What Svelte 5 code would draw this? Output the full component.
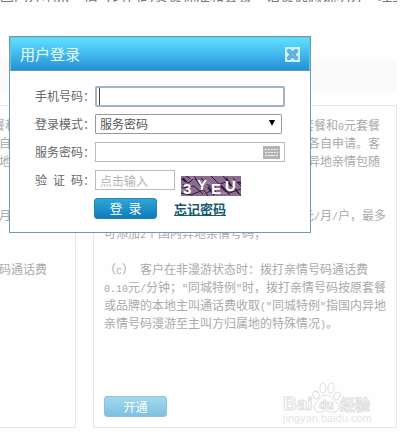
<script lang="ts">
	type Line = { text: string; tail?: 'short' | 'full' };

	const covered: Line[] = [
		{ text: '套餐和0元套餐', tail: 'short' },
		{ text: '各自申请。客', tail: 'short' },
		{ text: '异地亲情包随', tail: 'short' },
		{ text: '' },
		{ text: '' },
		{ text: '元/月/户，最多', tail: 'full' }
	];

	const leftLines: Line[] = [
		...covered,
		{ text: '' },
		{ text: '' },
		{ text: '（c） 客户在非漫游状态时：拨打亲情号码通话费' }
	];

	const rightLines: Line[] = [
		...covered,
		{ text: '可添加2个国内异地亲情号码；' },
		{ text: '' },
		{ text: '（c） 客户在非漫游状态时：拨打亲情号码通话费' },
		{ text: '0.10元/分钟；"同城特例"时，拨打亲情号码按原套餐' },
		{ text: '或品牌的本地主叫通话费收取("同城特例"指国内异地' },
		{ text: '亲情号码漫游至主叫方归属地的特殊情况)。' }
	];

	let phone = $state('');
	let mode = $state('service');
	let password = $state('');
	let code = $state('');

	// latin characters are set at half the width of a chinese one
	const parts = (text: string) => text.split(/([\x20-\x7e]+)/).filter(Boolean);
	const isHalf = (part: string) => /^[\x20-\x7e]/.test(part);
</script>

{#snippet mixed(text: string)}
	{#each parts(text) as part}<span class:half={isHalf(part)}>{part}</span>{/each}
{/snippet}

{#snippet card(lines: Line[])}
	<section class="card">
		<div class="copy">
			{#each lines as line}
				<p class={line.tail}>{@render mixed(line.text)}</p>
			{/each}
		</div>
		<button class="open" type="button">开通</button>
	</section>
{/snippet}

<main>
	<div class="page">
		<div class="notice"><p>国内异地亲　情号码包的资费标准和套餐　话费优惠说明办　理业务</p></div>
		<div class="band"></div>
		<div class="cards">
			{@render card(leftLines)}
			{@render card(rightLines)}
		</div>
	</div>

	<svg class="mark" width="92" height="46" viewBox="0 0 92 46" aria-hidden="true">
		<g fill="#fff" stroke="#dedede">
			<text x="1" y="30" class="brand">Bai</text>
			<ellipse cx="34" cy="15" rx="3" ry="4" transform="rotate(-20 34 15)" />
			<ellipse cx="41" cy="8" rx="3" ry="5" />
			<ellipse cx="49" cy="8" rx="3" ry="5" transform="rotate(10 49 8)" />
			<ellipse cx="55" cy="16" rx="3" ry="4" transform="rotate(25 55 16)" />
			<path d="M44 15c-5 0-6 4-9 7-4 3-4 9 1 10 3 1 5-1 8-1s6 2 9 1c5-1 5-7 1-10-4-3-5-7-10-7z" />
			<text x="37" y="29" class="du">du</text>
			<text x="58" y="30" class="cn">经验</text>
		</g>
		<text x="1" y="42" class="site">jingyan.baidu.com</text>
	</svg>

	<form class="dialog" onsubmit={(e) => e.preventDefault()}>
		<header>
			<h1>用户登录</h1>
			<button class="close" type="button" aria-label="关闭">
				<svg width="15" height="15" viewBox="0 0 15 15">
					<rect width="15" height="15" fill="#c9f3fb" />
					<path d="M4 4l7 7M11 4l-7 7" stroke="#4aa3d2" stroke-width="4" stroke-linecap="round" />
					<path d="M4 4l7 7M11 4l-7 7" stroke="#6fb6dc" stroke-width="2" stroke-linecap="round" />
				</svg>
			</button>
		</header>
		<div class="fields">
			<div class="row">
				<label for="phone">手机号码：</label>
				<div class="box">
					<input id="phone" class="active" type="text" bind:value={phone} />
					<i class="caret"></i>
				</div>
			</div>
			<div class="row">
				<label for="mode">登录模式：</label>
				<div class="box choice">
					<select id="mode" bind:value={mode}>
						<option value="service">服务密码</option>
					</select>
					<svg class="arrow" width="6" height="6" viewBox="0 0 6 6"><path d="M0 0h6L3 6z" /></svg>
				</div>
			</div>
			<div class="row">
				<label for="password">服务密码：</label>
				<div class="box">
					<input id="password" type="password" bind:value={password} />
					<svg class="keys" width="17" height="13" viewBox="0 0 17 13">
						<rect width="17" height="13" fill="#b4b4b4" />
						<path d="M2 3.500h13M2 6.500h13" stroke="#f4f4f4" stroke-dasharray="2 1" />
						<path d="M2 9.500h2M5 9.500h7M13 9.500h2" stroke="#f4f4f4" />
					</svg>
				</div>
			</div>
			<div class="row">
				<label for="code">{@render mixed('验 证 码：')}</label>
				<div class="code">
					<input id="code" type="text" placeholder="点击输入" bind:value={code} />
					<svg class="captcha" width="60" height="20" viewBox="0 0 60 20" role="img" aria-label="3YEU">
						<rect width="60" height="20" fill="#8c6b91" />
						<path
							d="M0 3l8 4 5-5 8 6M2 8l6 9M13 0l14 20M20 2l16 15M30 0l12 12M35 5l14 14M42 0l16 18M52 2l8 8M0 17l10 2 12-5M26 17l10-8 12-4M1 12l12-2 9 8M48 17l12-4M5 0l5 3M54 12l6 8"
							fill="none"
							stroke="#2b1b31"
						/>
						<path d="M16 4l6 9M27 11l6 8M40 10l7 7M45 2l5 8M2 2l3 4M55 5l5 2" fill="none" stroke="#2b1b31" stroke-width="2" />
						<path d="M0 14h4M9 2h5M22 7h7M38 17h8M50 5h8" stroke="#b898bb" />
						<g fill="#fff">
							<text x="2" y="18">3</text>
							<text x="16" y="14">Y</text>
							<text x="30" y="18">E</text>
							<text x="44" y="15">U</text>
						</g>
					</svg>
				</div>
			</div>
			<div class="actions">
				<button class="login" type="submit">{@render mixed('登 录')}</button>
				<a href="#forgot">忘记密码</a>
			</div>
		</div>
	</form>
</main>

<style>
	:global(body) {
		margin: 0;
		background: #fefefe;
	}
	main {
		position: relative;
		overflow: hidden;
		color: #666;
		font: 12px/18px 'Noto Sans CJK SC', sans-serif;
		text-spacing-trim: space-all;
	}
	p,
	h1 {
		margin: 0;
	}
	button,
	input,
	select {
		box-sizing: border-box;
		margin: 0;
		font: inherit;
	}
	.half {
		font-family: 'Liberation Mono', monospace;
		font-size: 10px;
		white-space: pre;
	}
	.page {
		padding: 0 3px 8px 0;
	}
	.notice {
		display: flex;
		align-items: flex-end;
		height: 2px;
		overflow: hidden;
		white-space: nowrap;
		color: #777;
	}
	.notice p {
		font-size: 14px;
		line-height: 14px;
	}
	.band {
		height: 33px;
		margin: 58px 0 12px;
		background: #fafafa;
	}
	.cards {
		display: flex;
		justify-content: flex-end;
		gap: 17px;
	}
	.card {
		display: flex;
		flex: 0 0 304px;
		flex-direction: column;
		align-items: flex-start;
		box-sizing: border-box;
		padding: 10px;
		border: 1px solid #e6e6e6;
		color: #aaa;
	}
	.copy {
		width: 282px;
		margin-bottom: 64px;
	}
	.copy p {
		height: 18px;
		white-space: nowrap;
	}
	.copy .short,
	.copy .full {
		text-align: right;
	}
	.copy .short {
		padding-right: 6px;
	}
	.open {
		width: 63px;
		height: 21px;
		margin-top: auto;
		padding: 0;
		border: 1px solid #8cc3d8;
		border-radius: 3px;
		background: linear-gradient(#a4d8eb, #7dc0e0);
		color: #fff;
		line-height: 18px;
	}
	.mark {
		position: absolute;
		right: 26px;
		bottom: 10px;
	}
	.brand {
		font: bold 19px 'Liberation Sans', sans-serif;
	}
	.du {
		font: bold 12px 'Liberation Sans', sans-serif;
	}
	.cn {
		font: bold 15px 'Noto Sans CJK SC', sans-serif;
	}
	.site {
		font: 11px 'Liberation Sans', sans-serif;
		fill: #e6e6e6;
	}
	.dialog {
		position: absolute;
		top: 36px;
		left: 9px;
		box-sizing: border-box;
		width: 302px;
		border: 1px solid #6a9dab;
		background: #fff;
	}
	header {
		display: flex;
		align-items: center;
		justify-content: space-between;
		box-sizing: border-box;
		height: 34px;
		padding: 0 9px;
		border: 1px solid #67c5ec;
		border-bottom-color: #5c9fc0;
		background: linear-gradient(#5fe0ff, #46bdee 45%, #258fd6);
	}
	h1 {
		color: #e8fcff;
		font-size: 15px;
		font-weight: 400;
		line-height: 20px;
	}
	.close {
		display: flex;
		padding: 0;
		border: 0;
		background: none;
	}
	.fields {
		padding: 15px 25px 13px;
	}
	.row {
		display: flex;
		height: 28px;
	}
	label {
		flex: 0 0 60px;
		line-height: 20px;
		white-space: nowrap;
	}
	.box {
		position: relative;
		width: 190px;
	}
	.choice {
		width: 187px;
	}
	input,
	select {
		display: block;
		width: 100%;
		height: 20px;
		padding: 0 4px;
		border: 1px solid #bbb;
		border-radius: 0;
		outline: 0;
		background: #fff;
		color: #555;
	}
	select {
		border-color: #999;
		border-radius: 1px;
		appearance: none;
		line-height: 18px;
	}
	.active {
		height: 21px;
		border: 2px solid #9fb4cc;
		border-radius: 2px;
	}
	.caret {
		position: absolute;
		top: 2px;
		left: 4px;
		width: 1px;
		height: 17px;
		background: #444;
	}
	.arrow {
		position: absolute;
		top: 6px;
		right: 7px;
	}
	.keys {
		position: absolute;
		top: 4px;
		right: 5px;
	}
	.code {
		display: flex;
		gap: 6px;
	}
	.code input {
		width: 80px;
	}
	input::placeholder {
		color: #b4b4b4;
	}
	.captcha {
		margin-top: 6px;
	}
	.captcha text {
		font: bold 15px 'Liberation Sans', sans-serif;
	}
	.actions {
		display: flex;
		align-items: center;
		gap: 17px;
		padding-left: 59px;
	}
	.login {
		width: 63px;
		height: 21px;
		padding: 0;
		border: 1px solid #2587ae;
		border-radius: 3px;
		background: linear-gradient(#2ea6d4, #0f7cbd);
		color: #fff;
		font-size: 13px;
		line-height: 18px;
	}
	a {
		color: #175a70;
		font-size: 13px;
		font-weight: 700;
		line-height: 18px;
	}
</style>
